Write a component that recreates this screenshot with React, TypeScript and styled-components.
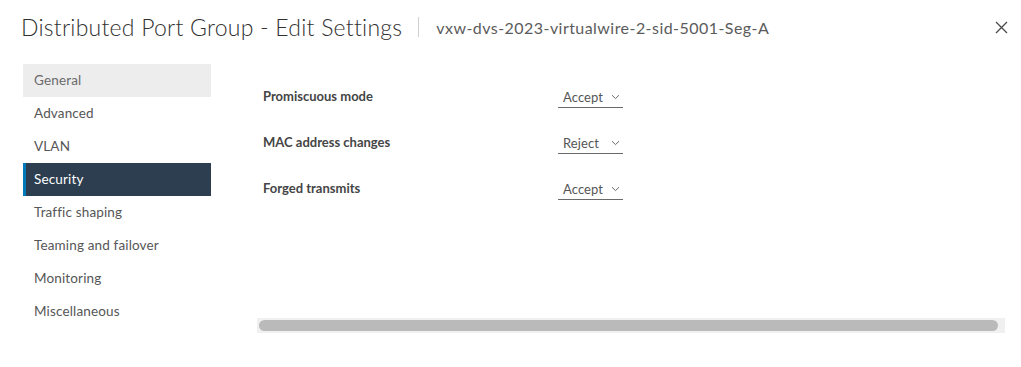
import React from "react";
import styled, { createGlobalStyle } from "styled-components";

const Global = createGlobalStyle`
  html, body { margin: 0; padding: 0; background: #ffffff; }
  body { font-family: Lato, "Noto Sans", sans-serif; color: #565656; }
`;

const Dialog = styled.div`
  width: 1021px;
  height: 367px;
  display: flex;
  flex-direction: column;
  background: #fff;
`;

const Header = styled.header`
  height: 54px;
  display: flex;
  align-items: center;
  padding: 0 13px 0 21px;
  box-sizing: border-box;
`;

const Title = styled.h1`
  margin: 0;
  font-size: 23px;
  font-weight: 300;
  color: #313131;
  letter-spacing: 0.24px;
  white-space: nowrap;
`;

const Divider = styled.span`
  width: 1px;
  height: 20px;
  background: #cfcfcf;
  margin: 0 17px 0 16px;
`;

const Subtitle = styled.span`
  font-size: 16px;
  font-weight: 400;
  color: #5b5b5b;
  white-space: nowrap;
  flex: 1;
  letter-spacing: 0.45px;
`;

const CloseButton = styled.button`
  border: 0;
  background: none;
  padding: 0;
  width: 14px;
  height: 14px;
  display: flex;
  align-items: center;
  justify-content: center;
  cursor: pointer;
  color: #4a4a4a;
`;

const Body = styled.div`
  display: flex;
  padding: 10px 0 0 23px;
  gap: 46px;
`;

const Nav = styled.nav`
  width: 188px;
  display: flex;
  flex-direction: column;
`;

const NavItem = styled.div<{ $active?: boolean; $hover?: boolean }>`
  height: 33px;
  display: flex;
  align-items: center;
  box-sizing: border-box;
  font-size: 13.5px;
  color: ${(p) => (p.$active ? "#ffffff" : p.$hover ? "#6a6a6a" : "#565656")};
  background: ${(p) => (p.$active ? "#2c3e4f" : p.$hover ? "#ededed" : "transparent")};
  border-left: 3px solid ${(p) => (p.$active ? "#0079b8" : "transparent")};
  padding: 0 0 2px 8px;
  letter-spacing: 0.15px;
`;

const Main = styled.main`
  width: 748px;
  height: 269px;
  display: flex;
  flex-direction: column;
`;

const Rows = styled.div`
  flex: 1;
  padding: 10px 0 0 6px;
`;

const Row = styled.div`
  height: 46px;
  display: flex;
  align-items: center;
`;

const Label = styled.div`
  width: 295px;
  font-size: 13px;
  font-weight: 700;
  color: #454545;
  padding-bottom: 2px;
`;

const Select = styled.div`
  width: 65px;
  height: 20px;
  box-sizing: border-box;
  border-bottom: 1px solid #6a6a6a;
  display: flex;
  align-items: center;
  padding: 0 3px 1px 5px;
  font-size: 13px;
  color: #565656;
  margin-top: 2px;
`;

const SelectValue = styled.span`
  flex: 1;
  letter-spacing: 0.1px;
`;

const Track = styled.div`
  height: 15px;
  background: #f0f0f0;
  padding: 2px 7px 2px 2px;
  box-sizing: border-box;
`;

const Thumb = styled.div`
  height: 11px;
  border-radius: 6px;
  background: #bababa;
`;

const Chevron = () => (
  <svg width="9" height="6" viewBox="0 0 9 6" fill="none">
    <path d="M1 1.2 L4.5 4.6 L8 1.2" stroke="#6a6a6a" strokeWidth="1" />
  </svg>
);

const navItems = [
  "General",
  "Advanced",
  "VLAN",
  "Security",
  "Traffic shaping",
  "Teaming and failover",
  "Monitoring",
  "Miscellaneous",
];

const settings = [
  { label: "Promiscuous mode", value: "Accept" },
  { label: "MAC address changes", value: "Reject" },
  { label: "Forged transmits", value: "Accept" },
];

export default function App() {
  return (
    <>
      <Global />
      <Dialog>
        <Header>
          <Title>Distributed Port Group - Edit Settings</Title>
          <Divider />
          <Subtitle>vxw-dvs-2023-virtualwire-2-sid-5001-Seg-A</Subtitle>
          <CloseButton aria-label="Close">
            <svg width="13" height="13" viewBox="0 0 13 13">
              <path d="M1 1 L12 12 M12 1 L1 12" stroke="currentColor" strokeWidth="1.3" />
            </svg>
          </CloseButton>
        </Header>
        <Body>
          <Nav>
            {navItems.map((n) => (
              <NavItem key={n} $active={n === "Security"} $hover={n === "General"}>
                {n}
              </NavItem>
            ))}
          </Nav>
          <Main>
            <Rows>
              {settings.map((s) => (
                <Row key={s.label}>
                  <Label>{s.label}</Label>
                  <Select>
                    <SelectValue>{s.value}</SelectValue>
                    <Chevron />
                  </Select>
                </Row>
              ))}
            </Rows>
            <Track>
              <Thumb />
            </Track>
          </Main>
        </Body>
      </Dialog>
    </>
  );
}
